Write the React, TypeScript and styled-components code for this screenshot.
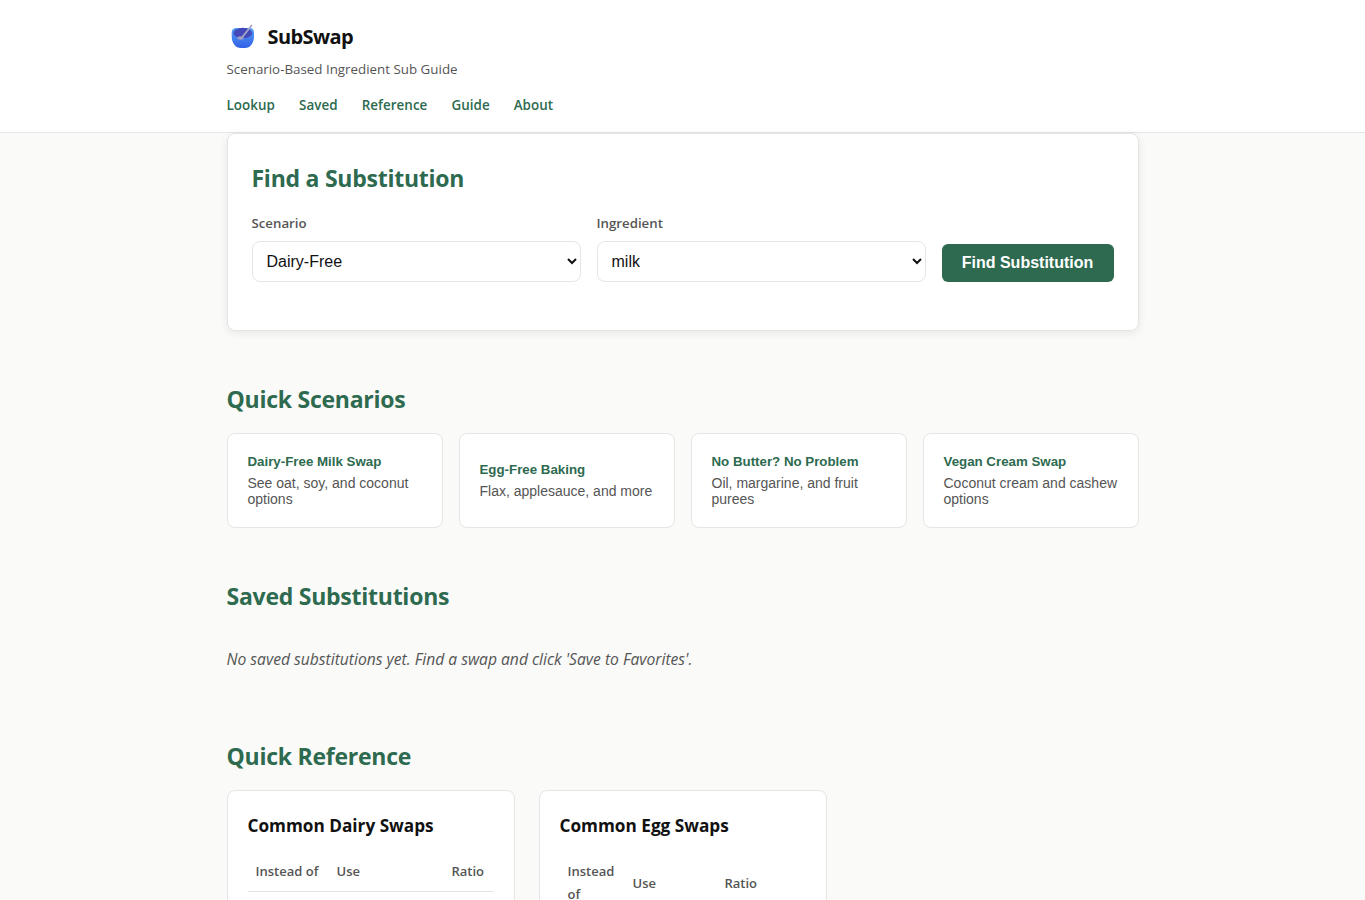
import React from "react";
import styled, { createGlobalStyle } from "styled-components";

const Global = createGlobalStyle`
  * { box-sizing: border-box; }
  html, body { margin: 0; padding: 0; height: 900px; overflow: hidden; }
  body { background: #fafaf8; color: #111; font-family: "Open Sans", "Noto Sans", sans-serif; }
`;
const Header = styled.header`
  background: #fff;
  border-bottom: 1px solid #e5e5e5;
  height: 133px;
`;
const Wrap = styled.div`
  width: 960px;
  margin: 0 auto;
  padding: 0 24px;
`;
const Brand = styled.div`
  display: flex;
  align-items: center;
  gap: 8px;
  padding-top: 20px;
  height: 53px;
`;
const Logo = styled.svg`
  width: 33px;
  height: 33px;
`;
const Title = styled.h1`
  margin: 0;
  font-size: 20px;
  line-height: 33px;
  font-weight: 700;
  letter-spacing: -0.6px;
`;
const Tagline = styled.p`
  margin: 7px 0 0;
  font-size: 13.35px;
  line-height: 18px;
  color: #555;
`;
const Nav = styled.nav`
  display: flex;
  gap: 24px;
  margin-top: 17px;
`;
const NavLink = styled.a`
  font-size: 13.4px;
  line-height: 20px;
  font-weight: 600;
  letter-spacing: 0.06px;
  color: #2d6a4f;
`;
const FormCard = styled.section`
  background: #fff;
  border: 1px solid #e5e5e5;
  border-radius: 8px;
  box-shadow: 0 2px 8px rgba(0, 0, 0, 0.08);
  padding: 28px 24px 24px;
  height: 198px;
`;
const Heading = styled.h2`
  margin: 0;
  font-size: 23px;
  line-height: 32px;
  font-weight: 700;
  color: #2d6a4f;
  letter-spacing: -0.25px;
`;
const FormRow = styled.div`
  display: flex;
  align-items: flex-end;
  gap: 16px;
  margin-top: 19px;
`;
const Field = styled.label`
  flex: 1;
  display: flex;
  flex-direction: column;
  gap: 8px;
  font-size: 13.25px;
  line-height: 20px;
  font-weight: 600;
  color: #555;
`;
const Select = styled.select`
  height: 41px;
  width: 100%;
  background: #fff;
  border: 1px solid #e5e5e5;
  border-radius: 8px;
  padding: 0 10px;
  font-family: "Liberation Sans", Arial, sans-serif;
  font-size: 16px;
  color: #111;
`;
const Submit = styled.button`
  flex: 0 0 172px;
  height: 38px;
  border: 0;
  border-radius: 6px;
  background: #2d6a4f;
  color: #fff;
  font-family: "Liberation Sans", Arial, sans-serif;
  font-size: 16px;
  font-weight: 700;
`;
const Section = styled.section<{ $top: number }>`
  margin-top: ${(p) => p.$top}px;
`;
const Scenarios = styled.div`
  display: grid;
  grid-template-columns: repeat(4, 1fr);
  gap: 16px;
  margin-top: 18px;
`;
const Scenario = styled.button`
  display: flex;
  flex-direction: column;
  justify-content: center;
  height: 95px;
  padding: 0 20px;
  background: #fff;
  border: 1px solid #e5e5e5;
  border-radius: 8px;
  text-align: left;
  font-family: "Liberation Sans", Arial, sans-serif;
`;
const ScenarioTitle = styled.strong`
  font-size: 13.3px;
  line-height: 16px;
  color: #2d6a4f;
  margin-bottom: 5px;
`;
const ScenarioText = styled.span`
  font-size: 14px;
  line-height: 16px;
  color: #555;
`;
const Empty = styled.p`
  margin: 36px 0 0;
  font-size: 15.65px;
  line-height: 22px;
  font-style: italic;
  color: #555;
`;
const RefGrid = styled.div`
  display: grid;
  grid-template-columns: 288px 288px;
  gap: 24px;
  margin-top: 18px;
`;
const RefCard = styled.div`
  background: #fff;
  border: 1px solid #e5e5e5;
  border-radius: 8px;
  padding: 20px;
`;
const RefTitle = styled.h3`
  margin: 0 0 12px;
  padding-top: 1px;
  font-size: 17.2px;
  line-height: 28px;
  font-weight: 700;
`;
const Table = styled.table`
  width: 100%;
  table-layout: fixed;
  border-collapse: collapse;
  font-size: 13px;
`;
const Th = styled.th`
  padding: 8px;
  text-align: left;
  font-weight: 600;
  line-height: 23px;
  color: #555;
  border-bottom: 1px solid #e5e5e5;
`;
const Td = styled.td`
  padding: 8px;
  line-height: 23px;
  border-bottom: 1px solid #e5e5e5;
`;

const scenarios = [
  ["Dairy-Free Milk Swap", "See oat, soy, and coconut options"],
  ["Egg-Free Baking", "Flax, applesauce, and more"],
  ["No Butter? No Problem", "Oil, margarine, and fruit purees"],
  ["Vegan Cream Swap", "Coconut cream and cashew options"],
];
const tables = [
  { title: "Common Dairy Swaps", cols: [81, 115, 50], rows: [["Milk", "Oat milk", "1:1"], ["Butter", "Coconut oil", "1:1"]] },
  { title: "Common Egg Swaps", cols: [65, 92, 89], rows: [["1 egg", "Flax egg", "1 tbsp"], ["1 egg", "Applesauce", "1/4 cup"]] },
];

export default function App() {
  return (
    <>
      <Global />
      <Header>
        <Wrap>
          <Brand>
            <Logo viewBox="0 0 33 33" aria-hidden="true">
              <defs>
                <linearGradient id="bowl" x1="0" y1="0" x2="0" y2="1">
                  <stop offset="0" stopColor="#55a0f6" />
                  <stop offset="1" stopColor="#3060e6" />
                </linearGradient>
              </defs>
              <path d="M4.700 12.500c0-2.800 1.800-4.500 4.500-4.500h13.500c2.700 0 4.300 1.700 4.300 4.500v3.500c0 7.500-4 12-9 12h-4c-5.500 0-9.300-4.500-9.300-12z" fill="url(#bowl)" />
              <ellipse cx="15.800" cy="13" rx="9.300" ry="5.300" fill="#4349b8" />
              <path d="M15 17.500L24.500 5.500" stroke="#a9a6c8" strokeWidth="1.800" strokeLinecap="round" />
              <ellipse cx="13.500" cy="18" rx="3.200" ry="1.700" fill="#a09dc0" />
            </Logo>
            <Title>SubSwap</Title>
          </Brand>
          <Tagline>Scenario-Based Ingredient Sub Guide</Tagline>
          <Nav>
            {["Lookup", "Saved", "Reference", "Guide", "About"].map((n) => (
              <NavLink key={n}>{n}</NavLink>
            ))}
          </Nav>
        </Wrap>
      </Header>
      <Wrap>
        <FormCard>
          <Heading>Find a Substitution</Heading>
          <FormRow>
            <Field>
              Scenario
              <Select defaultValue="Dairy-Free">
                <option>Dairy-Free</option>
                <option>Egg-Free</option>
                <option>Vegan</option>
              </Select>
            </Field>
            <Field>
              Ingredient
              <Select defaultValue="milk">
                <option>milk</option>
                <option>butter</option>
                <option>cream</option>
              </Select>
            </Field>
            <Submit>Find Substitution</Submit>
          </FormRow>
        </FormCard>
        <Section $top={52}>
          <Heading>Quick Scenarios</Heading>
          <Scenarios>
            {scenarios.map(([t, d]) => (
              <Scenario key={t}>
                <ScenarioTitle>{t}</ScenarioTitle>
                <ScenarioText>{d}</ScenarioText>
              </Scenario>
            ))}
          </Scenarios>
        </Section>
        <Section $top={52}>
          <Heading>Saved Substitutions</Heading>
          <Empty>No saved substitutions yet. Find a swap and click 'Save to Favorites'.</Empty>
        </Section>
        <Section $top={70}>
          <Heading>Quick Reference</Heading>
          <RefGrid>
            {tables.map((t) => (
              <RefCard key={t.title}>
                <RefTitle>{t.title}</RefTitle>
                <Table>
                  <colgroup>
                    {t.cols.map((c, i) => (
                      <col key={i} width={c} />
                    ))}
                  </colgroup>
                  <thead>
                    <tr>
                      <Th>Instead of</Th>
                      <Th>Use</Th>
                      <Th>Ratio</Th>
                    </tr>
                  </thead>
                  <tbody>
                    {t.rows.map((r) => (
                      <tr key={r[1]}>
                        {r.map((c) => (
                          <Td key={c}>{c}</Td>
                        ))}
                      </tr>
                    ))}
                  </tbody>
                </Table>
              </RefCard>
            ))}
          </RefGrid>
        </Section>
      </Wrap>
    </>
  );
}
